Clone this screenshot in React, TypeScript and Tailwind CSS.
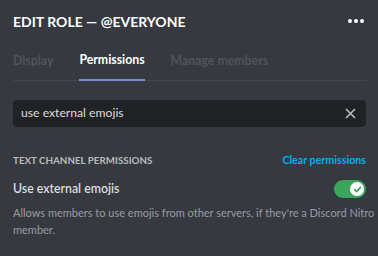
import React from "react";

export default function App() {
  return (
    <div className="w-[378px] h-[256px] bg-[#36393f] overflow-hidden" style={{ fontFamily: 'Lato, sans-serif' }}>
      <div className="flex items-center justify-between pl-[13px] pr-[14px] h-[42px] pt-[0px]">
        <div className="text-white font-bold text-[14px]">EDIT ROLE — @EVERYONE</div>
        <div className="flex gap-[2px]">
          <span className="w-[4px] h-[4px] rounded-full bg-white" />
          <span className="w-[4px] h-[4px] rounded-full bg-white" />
          <span className="w-[4px] h-[4px] rounded-full bg-white" />
        </div>
      </div>
      <div className="mx-[13px] mr-[12px] flex gap-[26px] border-b border-[#42454a] h-[39px] items-stretch">
        <div className="text-[#4f545c] text-[12.3px] font-bold flex items-center">Display</div>
        <div className="text-white text-[12.3px] font-bold flex items-center border-b-2 border-[#7f86d6] -mb-[1px]">Permissions</div>
        <div className="text-[#4f545c] text-[12.3px] font-bold flex items-center">Manage members</div>
      </div>
      <div className="mx-[13px] mr-[12px] mt-[19px] h-[27px] rounded-[4px] bg-[#202225] flex items-center justify-between pl-[8px] pr-[10px]">
        <span className="text-[#dcddde] text-[12.2px]">use external emojis</span>
        <svg width="11" height="11" viewBox="0 0 11 11">
          <path d="M1 1L10 10M10 1L1 10" stroke="#b9bbbe" strokeWidth="1.6" />
        </svg>
      </div>
      <div className="mx-[13px] mr-[12px] mt-[25px] flex items-center justify-between">
        <span className="text-[#b9bbbe] text-[9.8px] font-bold">TEXT CHANNEL PERMISSIONS</span>
        <span className="text-[#00b0f4] text-[10.7px] font-bold">Clear permissions</span>
      </div>
      <div className="mx-[13px] mr-[12px] mt-[12px] flex items-center justify-between">
        <span className="text-[#dcddde] text-[12.3px] font-semibold">Use external emojis</span>
        <div className="w-[32px] h-[18px] rounded-full bg-[#3ba55c] flex items-center justify-end pr-[2px]">
          <div className="w-[14px] h-[14px] rounded-full bg-white flex items-center justify-center">
            <svg width="9" height="9" viewBox="0 0 9 9">
              <path d="M1.5 4.7L3.6 6.6L7.5 2.4" stroke="#3ba55c" strokeWidth="1.7" fill="none" strokeLinecap="round" strokeLinejoin="round" />
            </svg>
          </div>
        </div>
      </div>
      <div className="ml-[13px] pr-[2px] mt-[7px] pb-[18px] border-b border-[#3f4248] text-[#999ca1] text-[11px] leading-[16.4px]">
        Allows members to use emojis from other servers, if they're a Discord Nitro member.
      </div>
    </div>
  );
}
